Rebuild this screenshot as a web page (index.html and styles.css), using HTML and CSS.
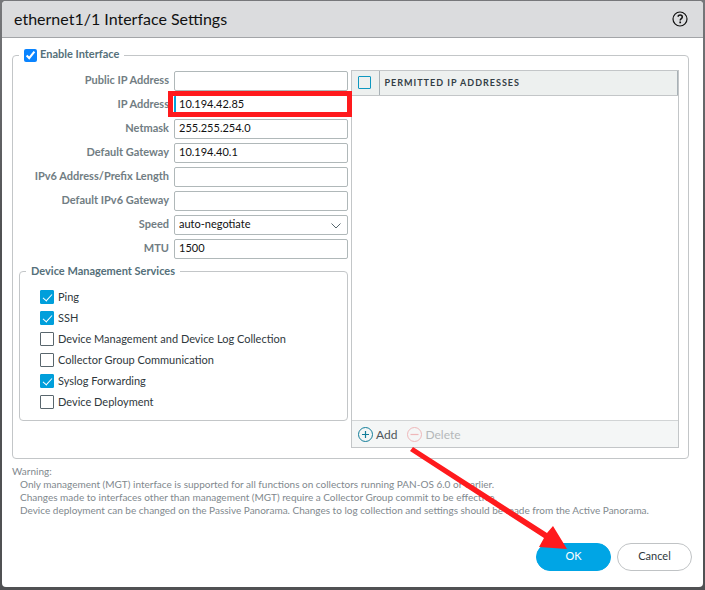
FILE: index.html
```html
<!DOCTYPE html>
<html lang="en">
<head>
    <meta charset="UTF-8">
    <meta name="viewport" content="width=device-width, initial-scale=1.0">
    <title>ethernet1/1 Interface Settings</title>
    <link rel="stylesheet" href="styles.css">
</head>
<body>
    <form class="dialog">
        <header class="dialog-header">
            <h1>ethernet1/1 Interface Settings</h1>
            <button type="button" class="help" aria-label="Help">
                <svg width="16" height="16" viewBox="0 0 16 16" fill="none" stroke="#111">
                    <circle cx="8" cy="8" r="7" stroke-width="1.2"/>
                    <path d="M5.8 5.6C6.3 4.4 7.2 4 8.1 4c1.3 0 2.2.8 2.2 1.9 0 1.7-2.1 1.7-2.1 3.5" stroke-width="1.5"/>
                    <path d="M8.2 10.6v1.7" stroke-width="1.7"/>
                </svg>
            </button>
        </header>

        <fieldset class="group interface">
            <legend>
                <input type="checkbox" id="enable" class="native-check" checked>
                <label for="enable">Enable Interface</label>
            </legend>
            <div class="columns">
                <div class="settings">
                    <div class="fields">
                        <label for="publicIp">Public IP Address</label>
                        <input type="text" id="publicIp">
                        <label for="ip">IP Address</label>
                        <div class="marked"><input type="text" id="ip" class="changed" value="10.194.42.85"></div>
                        <label for="netmask">Netmask</label>
                        <input type="text" id="netmask" value="255.255.254.0">
                        <label for="gateway">Default Gateway</label>
                        <input type="text" id="gateway" value="10.194.40.1">
                        <label for="ipv6">IPv6 Address/Prefix Length</label>
                        <input type="text" id="ipv6">
                        <label for="ipv6Gateway">Default IPv6 Gateway</label>
                        <input type="text" id="ipv6Gateway">
                        <label for="speed">Speed</label>
                        <div class="select-box">
                            <select id="speed">
                                <option>auto-negotiate</option>
                            </select>
                            <svg class="chevron" width="10" height="6" viewBox="0 0 10 6" fill="none" stroke="#56666d"><path d="M.5.5 5 5 9.5.5"/></svg>
                        </div>
                        <label for="mtu">MTU</label>
                        <input type="text" id="mtu" value="1500">
                    </div>
                    <fieldset class="group services">
                        <legend>Device Management Services</legend>
                        <label><input type="checkbox" class="check" checked>Ping</label>
                        <label><input type="checkbox" class="check" checked>SSH</label>
                        <label><input type="checkbox" class="check">Device Management and Device Log Collection</label>
                        <label><input type="checkbox" class="check">Collector Group Communication</label>
                        <label><input type="checkbox" class="check" checked>Syslog Forwarding</label>
                        <label><input type="checkbox" class="check">Device Deployment</label>
                    </fieldset>
                </div>

                <section class="grid-panel">
                    <table>
                        <thead>
                            <tr>
                                <th class="select-col"><input type="checkbox" class="check-all" aria-label="Select all"></th>
                                <th>PERMITTED IP ADDRESSES</th>
                            </tr>
                        </thead>
                    </table>
                    <div class="toolbar">
                        <button type="button">
                            <svg width="15" height="15" viewBox="0 0 15 15" fill="none" stroke="#137d99"><circle cx="7.5" cy="7.5" r="7"/><path d="M7.5 4v7M4 7.5h7" stroke-width="1.2"/></svg>
                            Add
                        </button>
                        <button type="button" disabled>
                            <svg width="15" height="15" viewBox="0 0 15 15" fill="none" stroke="#eeb7b9"><circle cx="7.5" cy="7.5" r="7"/><path d="M3.5 7.5h8" stroke-width="1.2"/></svg>
                            Delete
                        </button>
                    </div>
                </section>
            </div>
        </fieldset>

        <div class="warning">
            Warning:
            <ul>
                <li>Only management (MGT) interface is supported for all functions on collectors running PAN-OS 6.0 or earlier.</li>
                <li>Changes made to interfaces other than management (MGT) require a Collector Group commit to be effective.</li>
                <li>Device deployment can be changed on the Passive Panorama. Changes to log collection and settings should be made from the Active Panorama.</li>
            </ul>
        </div>

        <footer class="actions">
            <button type="submit" class="primary">OK</button>
            <button type="button">Cancel</button>
            <svg class="arrow" width="158" height="104" viewBox="0 0 158 104" fill="#ff1a1d">
                <path d="M3 0 137 86 143 79 157 102 129 100 134 91 0 4z"/>
            </svg>
        </footer>
    </form>
</body>
</html>
```
FILE: styles.css
```css
* {
    box-sizing: border-box;
}
body {
    margin: 0;
    padding: 1px 2px 3px;
    min-height: 100vh;
    background: linear-gradient(#77787b, #505153 40%, #505153);
    font-family: Lato, "Liberation Sans", sans-serif;
    font-size: 11px;
    color: #2f383d;
}
button, input, select {
    font: inherit;
    margin: 0;
}
button {
    padding: 0;
    border: 0;
    background: none;
    cursor: pointer;
}
.dialog {
    background: #fff;
    border-radius: 4px;
    overflow: hidden;
}
.dialog-header {
    display: flex;
    align-items: center;
    justify-content: space-between;
    height: 37px;
    padding: 0 15px 1px 12px;
    background: #dbdcde;
    border-bottom: 1px solid #a3a5a8;
}
.dialog-header h1 {
    margin: 0;
    font-size: 16px;
    font-weight: 400;
    color: #111;
}
.help svg {
    display: block;
}

.group {
    min-width: 0;
    margin: 0;
    border: 1px solid #c3c6c8;
    border-radius: 4px;
}
legend {
    color: #55707a;
    font-weight: 700;
}
.interface {
    margin: 9px 14px 0 10px;
    padding: 7px 9px 10px 6px;
}
.interface > legend {
    display: flex;
    align-items: center;
    gap: 3px;
    height: 16px;
    padding: 0 5px;
}
.interface > legend label {
    padding-bottom: 3px;
}
.native-check {
    width: 13px;
    height: 13px;
    accent-color: #0a84ff;
}
.columns {
    display: grid;
    grid-template-columns: 329px 1fr;
    gap: 3px;
}
.settings {
    padding-top: 1px;
}

.fields {
    display: grid;
    grid-template-columns: 1fr 174px;
    align-items: center;
    gap: 4px 5px;
}
.fields label {
    padding-bottom: 3px;
    text-align: right;
    font-weight: 700;
    color: #717d83;
}
.fields input, .fields select {
    display: block;
    width: 100%;
    height: 20px;
    padding: 0 4px 3px;
    border: 1px solid #b0b8b9;
    border-radius: 2px;
    background: #fff;
    color: #111;
}
.fields .changed {
    padding-left: 3px;
    border-left: 2px solid #00a4dc;
}
.fields select {
    appearance: none;
}
.marked, .select-box {
    position: relative;
}
.marked::after {
    content: "";
    position: absolute;
    inset: -4px -4px -2px -6px;
    border: 5px solid #ff1a1d;
}
.chevron {
    position: absolute;
    right: 7px;
    top: 8px;
}

.services {
    display: flex;
    flex-direction: column;
    gap: 7px;
    margin-top: 5px;
    padding: 12px 20px 11px;
}
.services legend {
    height: 14px;
    line-height: 13px;
    padding: 0 5px;
    margin-left: -14px;
}
.services label {
    display: flex;
    align-items: center;
    gap: 4px;
    height: 14px;
    line-height: 14px;
}
.check {
    appearance: none;
    position: relative;
    width: 14px;
    height: 14px;
    border: 1px solid #59666d;
    border-radius: 1px;
}
.check:checked {
    border-color: #009fdb;
    background: #009fdb;
}
.check:checked::after {
    content: "";
    position: absolute;
    left: 4px;
    top: 1px;
    width: 4px;
    height: 8px;
    border: solid #fff;
    border-width: 0 1px 1px 0;
    transform: rotate(42deg);
}

.grid-panel {
    display: flex;
    flex-direction: column;
    justify-content: space-between;
    min-height: 378px;
    border: 1px solid #c3c6c8;
}
.grid-panel table {
    width: 100%;
    border-collapse: collapse;
}
.grid-panel th {
    height: 24px;
    padding: 0 5px;
    background: #edf0ef;
    border-bottom: 1px solid #c3c6c8;
    border-right: 1px solid #a8b1b6;
    text-align: left;
    font-size: 9px;
    letter-spacing: 1px;
    color: #333e45;
}
.grid-panel .select-col {
    width: 27px;
    padding: 0 6px;
}
.check-all {
    appearance: none;
    display: block;
    width: 13px;
    height: 13px;
    border: 1px solid #0e98c0;
    border-radius: 1px;
}
.toolbar {
    display: flex;
    align-items: center;
    gap: 10px;
    height: 27px;
    padding: 0 6px;
    background: #f4f6f6;
    border-top: 1px solid #d1d4d5;
}
.toolbar button {
    display: flex;
    align-items: center;
    gap: 3px;
    font-size: 12px;
    color: #4c555a;
}
.toolbar button:disabled {
    color: #b4b8ba;
}

.warning {
    padding: 6px 10px 0;
    font-size: 10px;
    line-height: 13px;
    color: #7f898e;
}
.warning ul {
    margin: 0;
    padding-left: 8px;
    list-style: none;
}
.actions {
    position: relative;
    display: flex;
    justify-content: flex-end;
    gap: 6px;
    padding: 26px 11px 16px;
}
.actions button {
    width: 75px;
    height: 28px;
    padding-bottom: 3px;
    border: 1px solid #c0c3c5;
    border-radius: 14px;
    color: #2f383d;
}
.actions .primary {
    border-color: #00a5e5;
    background: #00a5e5;
    color: #fff;
}
.arrow {
    position: absolute;
    right: 135px;
    bottom: 36px;
}
```
